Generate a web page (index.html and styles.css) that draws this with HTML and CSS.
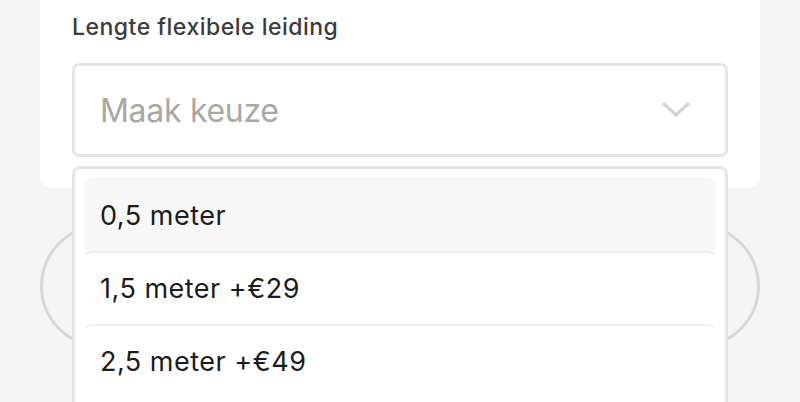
FILE: index.html
```html
<!DOCTYPE html>
<html lang="nl">
<head>
<meta charset="utf-8">
<title>Lengte flexibele leiding</title>
<link rel="stylesheet" href="styles.css">
</head>
<body>
<div class="page">
  <section class="card">
    <label class="label">Lengte flexibele leiding</label>
    <div class="select">
      <span class="placeholder">Maak keuze</span>
      <svg class="chevron" width="30" height="20" viewBox="0 0 30 20" aria-hidden="true">
        <path d="M3 4 L15 15 L27 4" fill="none" stroke="#d3d3d9" stroke-width="3.2" stroke-linecap="round" stroke-linejoin="round"/>
      </svg>
    </div>
  </section>
  <div class="pill"></div>
  <ul class="dropdown">
    <li class="option active">0,5 meter</li>
    <li class="option">1,5 meter +€29</li>
    <li class="option">2,5 meter +€49</li>
  </ul>
</div>
</body>
</html>
```
FILE: styles.css
```css
* { box-sizing: border-box; }
html, body { margin: 0; padding: 0; }
body {
  background: #f5f5f6;
  font-family: Inter, "Liberation Sans", sans-serif;
  width: 800px;
  height: 402px;
  overflow: hidden;
}
.page {
  position: relative;
  padding: 0 40px;
}
.card {
  background: #ffffff;
  border-radius: 0 0 14px 14px;
  padding: 13px 32px 31px;
  display: flex;
  flex-direction: column;
}
.label {
  font-size: 23px;
  font-weight: 500;
  color: #3b3b3b;
  line-height: 28px;
  letter-spacing: 0.5px;
  margin-bottom: 22px;
}
.select {
  height: 94px;
  border: 3px solid #e5e5e9;
  border-radius: 7px;
  display: flex;
  align-items: center;
  justify-content: space-between;
  padding: 0 34px 0 25px;
}
.placeholder {
  font-size: 32px;
  color: #a9a7a2;
  letter-spacing: -0.3px;
  margin-top: 1px;
}
.chevron { display: block; }
.pill {
  margin-top: 36px;
  height: 124px;
  border: 3px solid #d6d6dc;
  border-radius: 62px;
}
.dropdown {
  position: absolute;
  top: 166px;
  left: 72px;
  width: 656px;
  height: 260px;
  margin: 0;
  list-style: none;
  background: #ffffff;
  border: 3px solid #e5e5e9;
  border-radius: 8px;
  padding: 9px;
}
.option {
  height: 73px;
  display: flex;
  align-items: center;
  padding-left: 16px;
  font-size: 27px;
  color: #1c1c1c;
  letter-spacing: 0.5px;
  border-top: 2px solid #eeeef0;
  border-radius: 8px;
}
.option.active {
  background: #f7f7f8;
  border-top-color: transparent;
}
```
